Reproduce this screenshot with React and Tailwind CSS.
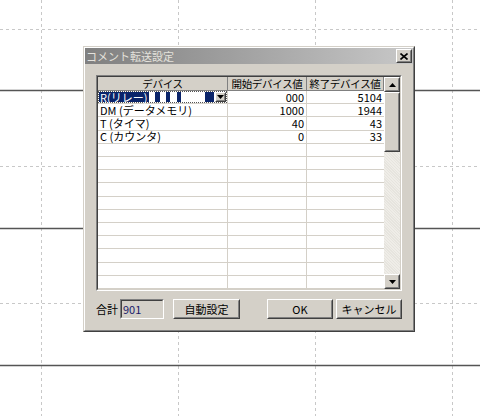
const rows = [
  { dev: 'R(リレー)', start: '000', end: '5104', selected: true },
  { dev: 'DM (データメモリ)', start: '1000', end: '1944' },
  { dev: 'T (タイマ)', start: '40', end: '43' },
  { dev: 'C (カウンタ)', start: '0', end: '33' },
]
const emptyRows = Array.from({ length: 11 })

const font = { fontFamily: '"Noto Sans CJK JP", "Noto Sans", sans-serif' }

function Background() {
  return (
    <svg className="absolute inset-0" width="480" height="416">
      {[41, 178, 315, 452].map(x => (
        <line key={x} x1={x + 0.5} y1="0" x2={x + 0.5} y2="416" stroke="#c8c8c8" strokeDasharray="3 3" />
      ))}
      {[29, 166, 303].map(y => (
        <line key={y} x1="0" y1={y + 0.5} x2="480" y2={y + 0.5} stroke="#c8c8c8" strokeDasharray="3 3" />
      ))}
      {[90, 228, 365].map(y => (
        <line key={y} x1="0" y1={y + 0.5} x2="480" y2={y + 0.5} stroke="#555" strokeWidth="1.5" />
      ))}
    </svg>
  )
}

function Raised({ className = '', children }) {
  return (
    <div className={`border border-t-white border-l-white border-r-[#404040] border-b-[#404040] ${className}`}>
      <div className="w-full h-full border border-t-[#d4d0c8] border-l-[#d4d0c8] border-r-[#808080] border-b-[#808080] bg-[#d4d0c8] flex items-center justify-center">
        {children}
      </div>
    </div>
  )
}

function Arrow({ up }) {
  return (
    <svg width="7" height="4" viewBox="0 0 7 4">
      <path d={up ? 'M0 4 L3.5 0 L7 4 Z' : 'M0 0 L3.5 4 L7 0 Z'} fill="#000" />
    </svg>
  )
}

function Button({ w, children }) {
  return (
    <Raised className={`${w} h-[20px]`}>
      <span className="text-[11px] text-black leading-none whitespace-nowrap">{children}</span>
    </Raised>
  )
}

export default function App() {
  return (
    <div className="relative w-[480px] h-[416px] bg-white overflow-hidden" style={font}>
      <Background />

      {/* dialog window */}
      <div className="absolute left-[83px] top-[46px] w-[332px] h-[286px] border border-t-[#d4d0c8] border-l-[#d4d0c8] border-r-[#404040] border-b-[#404040]">
        <div className="w-full h-full border border-t-white border-l-white border-r-[#808080] border-b-[#808080] bg-[#d4d0c8] flex flex-col">
          {/* title bar */}
          <div className="h-[16px] bg-gradient-to-r from-[#808080] to-[#c8c8c8] flex items-center justify-between pl-[1px] pr-[1px]">
            <span className="text-[11px] leading-none text-[#e4e2dc] whitespace-nowrap">コメント転送設定</span>
            <Raised className="w-[16px] h-[14px]">
              <svg width="8" height="7" viewBox="0 0 8 7">
                <path d="M0.5 0.5 L7.5 6.5 M7.5 0.5 L0.5 6.5" stroke="#000" strokeWidth="1.6" />
              </svg>
            </Raised>
          </div>

          <div className="flex flex-col px-[11px] pt-[11px]">
            {/* grid */}
            <div className="h-[216px] border border-t-[#808080] border-l-[#808080] border-r-white border-b-white">
              <div className="h-full border border-t-[#404040] border-l-[#404040] border-r-[#d4d0c8] border-b-[#d4d0c8] bg-white flex">
                <div className="flex-1 flex flex-col min-w-0">
                  {/* header */}
                  <div className="h-[14px] flex text-[10.5px] leading-[12px] text-black whitespace-nowrap tracking-[-0.3px]">
                    <div className="w-[130px] bg-[#d4d0c8] border-r border-r-[#808080] border-b border-b-[#808080] flex items-center justify-center">デバイス</div>
                    <div className="w-[79px] bg-[#d4d0c8] border-r border-r-[#808080] border-b border-b-[#808080] flex items-center justify-center">開始デバイス値</div>
                    <div className="flex-1 bg-[#d4d0c8] border-r border-r-[#808080] border-b border-b-[#808080] flex items-center justify-center">終了デバイス値</div>
                  </div>
                  <div className="flex-1 flex flex-col min-h-0">
                    {rows.map((r, i) => (
                      <div key={i} className="flex-1 min-h-0 flex text-[11px] leading-[11px] text-black whitespace-nowrap">
                        <div className="w-[130px] border-r border-b border-[#d4d0c8] flex items-center">
                          {r.selected ? (
                            <div className="w-full h-full flex items-stretch border border-dotted border-[#555]">
                              <div className="bg-[#0a246a] text-white flex items-center pl-[1px] pr-[2px]">{r.dev}</div>
                              <div className="w-[5px] bg-[#0a246a] ml-[6px]" />
                              <div className="w-[4px] bg-[#0a246a] ml-[6px]" />
                              <div className="w-[4px] bg-[#0a246a] ml-[7px]" />
                              <div className="w-[9px] bg-[#0a246a] ml-[24px]" />
                              <div className="flex-1" />
                              <Raised className="w-[11px] h-full">
                                <Arrow />
                              </Raised>
                            </div>
                          ) : (
                            <span className="pl-[2px]">{r.dev}</span>
                          )}
                        </div>
                        <div className="w-[79px] border-r border-b border-[#d4d0c8] flex items-center justify-end pr-[2px]">{r.start}</div>
                        <div className="flex-1 border-b border-[#d4d0c8] flex items-center justify-end pr-[2px]">{r.end}</div>
                      </div>
                    ))}
                    {emptyRows.map((_, i) => (
                      <div key={i} className="flex-1 min-h-0 flex">
                        <div className="w-[130px] border-r border-b border-[#d4d0c8]" />
                        <div className="w-[79px] border-r border-b border-[#d4d0c8]" />
                        <div className="flex-1 border-b border-[#d4d0c8]" />
                      </div>
                    ))}
                  </div>
                </div>
                {/* scrollbar */}
                <div className="w-[16px] flex flex-col bg-[#ebe9e3]">
                  <Raised className="w-[16px] h-[15px]"><Arrow up /></Raised>
                  <Raised className="w-[16px] h-[60px]" />
                  <div className="flex-1 bg-[repeating-linear-gradient(45deg,#efede8_0px,#efede8_1px,#e6e4de_1px,#e6e4de_2px)]" />
                  <Raised className="w-[16px] h-[15px]"><Arrow /></Raised>
                </div>
              </div>
            </div>

            {/* bottom controls */}
            <div className="mt-[8px] h-[20px] flex items-center">
              <span className="text-[11px] leading-none text-black w-[24px] whitespace-nowrap">合計</span>
              <div className="w-[44px] h-[20px] border border-t-[#808080] border-l-[#808080] border-r-white border-b-white">
                <div className="h-full border border-t-[#404040] border-l-[#404040] border-r-[#d4d0c8] border-b-[#d4d0c8] bg-[#d4d0c8] flex items-center pl-[1px]">
                  <span className="text-[11px] leading-none text-[#1a1a6a]">901</span>
                </div>
              </div>
              <div className="ml-[9px]"><Button w="w-[67px]">自動設定</Button></div>
              <div className="ml-[27px]"><Button w="w-[66px]">OK</Button></div>
              <div className="ml-[3px]"><Button w="w-[66px]">キャンセル</Button></div>
            </div>
          </div>
        </div>
      </div>
    </div>
  )
}
